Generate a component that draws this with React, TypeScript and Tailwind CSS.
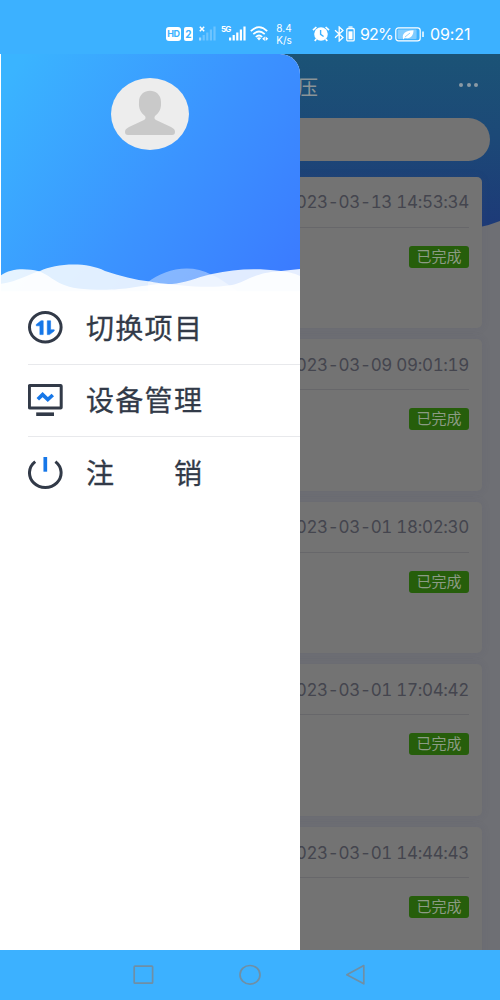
import type { ReactNode } from 'react';

const records = [
  '2023-03-13 14:53:34',
  '2023-03-09 09:01:19',
  '2023-03-01 18:02:30',
  '2023-03-01 17:04:42',
  '2023-03-01 14:44:43',
];

function Signal({ className, faded }: { className: string; faded?: boolean }) {
  return (
    <svg className={className} viewBox="0 0 17 15" fill="#fff">
      <rect x="0" y="11.5" width="2.2" height="3" />
      <rect x="3.6" y="9" width="2.2" height="5.5" opacity={faded ? 0.5 : 1} />
      <rect x="7.2" y="6.5" width="2.2" height="8" opacity={faded ? 0.5 : 1} />
      <rect x="10.8" y="3.5" width="2.2" height="11" opacity={faded ? 0.5 : 1} />
      <rect x="14.4" y="0.5" width="2.2" height="14" opacity={faded ? 0.5 : 1} />
    </svg>
  );
}

function StatusBar() {
  return (
    <header className="h-[54px] shrink-0 bg-[#3cb1ff] flex items-start pt-[23px] pl-[166px] text-white">
      <div className="mt-[4px] h-[14px] w-[15px] rounded-[3px] bg-white text-[#3cb1ff] text-[9px] leading-[14px] font-bold text-center tracking-[-0.3px]">HD</div>
      <div className="mt-[4px] ml-[3px] h-[14px] w-[9px] rounded-[2px] bg-white text-[#3cb1ff] text-[10px] leading-[14px] font-bold text-center">2</div>
      <svg className="ml-[6px] mt-[3px] w-[6px] h-[6px]" viewBox="0 0 6 6" stroke="#fff" strokeWidth="1.5">
        <path d="M.8.8l4.4 4.4M5.2.8L.8 5.2" />
      </svg>
      <Signal className="w-[17px] h-[15px] -ml-[6px] mt-[3px] opacity-50" faded />
      <span className="ml-[5px] mt-[2px] w-[9px] text-[8px] leading-[9px] font-bold tracking-[-0.8px]">5G</span>
      <Signal className="w-[17px] h-[15px] mt-[3px] -ml-px" />
      <svg className="ml-[4px] mt-[3px] w-[19px] h-[16px]" viewBox="0 0 19 16" fill="none" stroke="#fff" strokeWidth="1.7">
        <path d="M.8 5.2Q9 -2.8 17.2 5.2M3.3 8.2Q9 2.8 14.7 8.2M5.8 11Q9 8 12.2 11" />
        <path d="M6.8 12L9 14.5L11.2 12Q9 10.5 6.8 12Z" fill="#fff" stroke="none" />
        <path d="M14.8 10.5L12.2 12.8L14.8 15ZM15.6 10.5L18.3 12.8L15.6 15Z" fill="#fff" stroke="none" />
      </svg>
      <div className="ml-[5px] w-[20px] -mt-px text-center text-[10px] leading-[12px]">
        <div>8.4</div>
        <div>K/s</div>
      </div>
      <svg className="ml-[18px] mt-[3px] w-[18px] h-[16px]" viewBox="0 0 18 16">
        <circle cx="9" cy="8" r="6.8" fill="#fff" />
        <path d="M1 4.2L4.4 1M17 4.2L13.6 1M4.3 13L2.8 15M13.7 13L15.2 15" stroke="#fff" strokeWidth="1.7" />
        <path d="M8.6 4V8.4L11.6 10.5" stroke="#3cb1ff" strokeWidth="1.4" fill="none" />
      </svg>
      <svg className="ml-[4px] mt-[3px] w-[11px] h-[16px]" viewBox="0 0 11 16" fill="none" stroke="#fff" strokeWidth="1.3">
        <path d="M1 4.2L9 11.4L5.2 15V1L9 4.6L1 11.8" />
      </svg>
      <svg className="ml-px mt-[3px] w-[9px] h-[16px]" viewBox="0 0 9 16" fill="none" stroke="#fff" strokeWidth="1.3">
        <rect x="0.8" y="2.5" width="7.4" height="12.4" rx="1.2" />
        <path d="M2.5 1H6.5" />
        <rect x="2.5" y="5.3" width="4" height="8" fill="#fff" stroke="none" />
      </svg>
      <span className="ml-[5px] w-[33px] text-[16px] leading-[23px] tracking-[-0.9px] whitespace-nowrap">92%</span>
      <svg className="ml-[2px] mt-[4px] w-[30px] h-[15px]" viewBox="0 0 30 15">
        <rect x="0.8" y="0.8" width="24.4" height="13" rx="2.6" fill="none" stroke="#fff" strokeWidth="1.2" />
        <rect x="2.6" y="2.6" width="19" height="9.4" rx="1" fill="#fff" opacity=".35" />
        <path d="M8 11.5C7 7 10 3.7 18.5 3.3C18.5 8 16 12.5 9.7 10.8L8.2 12.5Z" fill="#fff" />
        <path d="M10 10L15 6" stroke="#75c8ff" strokeWidth=".8" />
        <path d="M28 4.5V10" stroke="#fff" strokeWidth="1.5" />
      </svg>
      <span className="ml-[5px] text-[16px] leading-[23px] tracking-[-0.1px]">09:21</span>
    </header>
  );
}

function RecordCard({ time }: { time: string }) {
  return (
    <article className="h-[151.6px] shrink-0 rounded-[5px] bg-[#737373] px-[13px] pt-px shadow-[0_0_8px_rgba(70,70,110,0.12)]">
      <div className="h-[50px] flex items-center justify-end border-b border-[#67676a] pt-[2px] text-[17px] tracking-[-0.32px] text-[#44454e] tabular-nums whitespace-nowrap">
        {time}
      </div>
      <div className="flex justify-end pt-[18px]">
        <span className="h-[22px] w-[60px] rounded-[3px] bg-[#265e0b] text-center text-[15px] leading-[21px] text-[#8b9b84]">已完成</span>
      </div>
    </article>
  );
}

function RecordsPage() {
  return (
    <div className="relative h-full overflow-hidden bg-[#6e6f74]">
      <svg className="absolute left-0 top-0 w-[500px] h-[180px]" viewBox="0 0 500 180">
        <defs>
          <linearGradient id="banner" x1="0" y1="0" x2="0" y2="1">
            <stop offset="0" stopColor="#1b5376" />
            <stop offset=".45" stopColor="#1c4977" />
            <stop offset="1" stopColor="#1d3978" />
          </linearGradient>
        </defs>
        <path d="M0 0H500V167Q490 171 480 173Q250 186 0 167Z" fill="url(#banner)" />
      </svg>
      <div className="relative flex h-full flex-col">
        <div className="flex h-[64px] shrink-0 items-center justify-end pr-[22px]">
          <h1 className="mr-[141px] mt-[4px] text-[20.5px] leading-[28px] text-[#8b9497]">保压</h1>
          <div className="flex gap-[3.5px] -mt-[2px]">
            <i className="size-[4px] rounded-full bg-[#8b9aa5]" />
            <i className="size-[4px] rounded-full bg-[#8b9aa5]" />
            <i className="size-[4px] rounded-full bg-[#8b9aa5]" />
          </div>
        </div>
        <div className="mx-[10px] h-[43px] shrink-0 rounded-full bg-[#737373]" />
        <div className="mt-[15.5px] flex flex-col gap-[11px] pl-[18px] pr-[18px]">
          {records.map((time) => (
            <RecordCard key={time} time={time} />
          ))}
        </div>
      </div>
    </div>
  );
}

function MenuItem({ icon, label, last }: { icon: ReactNode; label: string; last?: boolean }) {
  return (
    <li className={last ? 'ml-[28px] flex h-[72.5px] items-center' : 'ml-[28px] flex h-[72.5px] items-center border-b border-[#e8e9ec]'}>
      {icon}
      <span className="ml-[23px] pt-[2px] whitespace-pre text-[28px] leading-[40px] font-normal tracking-[1.3px] text-[#323a48] [-webkit-text-stroke:0.3px_#323a48]">{label}</span>
    </li>
  );
}

function Drawer() {
  return (
    <aside className="absolute left-0 top-0 h-full w-[300px] overflow-hidden rounded-tr-[20px] bg-white">
      <div className="relative ml-px flex h-[238px] justify-center bg-[linear-gradient(125deg,#3ab4ff_5%,#3b93ff_55%,#3b79ff_100%)] pt-[24px] pr-[2px]">
        <svg className="h-[72px] w-[78px]" viewBox="0 0 78 72">
          <ellipse cx="39" cy="36" rx="39" ry="36" fill="#ededed" />
          <path d="M28 24C28 9 50 9 50 24C50.5 31 48 35 44 38C43 40 43.5 41 45 42L60 49C63 50.5 64 52 64 54C64 56 63 57 61 57H17C15 57 14 56 14 54C14 52 15 50.5 18 49L33 42C34.5 41 35 40 34 38C30 35 27.5 31 28 24Z" fill="#c9c9c9" />
        </svg>
        <svg className="absolute -left-px top-[200px] h-[56px] w-[300px]" viewBox="0 0 300 56">
          <path d="M148 28C163 17 188 8 212 21C222 25 228 31 237 37V56H148Z" fill="#fff" opacity=".38" />
          <path d="M0 30C20 27 28 20 40 17C55 10 85 7 105 17C120 22 135 26 150 27.5C160 29.5 168 30 172 30C185 29 195 24 212 20C235 15 255 14 281 17C290 18 296 20 300 22V56H0Z" fill="#fff" opacity=".85" />
          <path d="M0 22C12 13 28 15 38 17C54 22 55 34 90 35.5C125 37 135 32 160 30C175 29 200 36 232 31C246 28 252 19 281 17L300 15V56H0Z" fill="#fff" opacity=".87" />
          <rect y="37" width="300" height="19" fill="#fff" opacity=".8" />
        </svg>
      </div>
      <ul>
        <MenuItem
          label="切换项目"
          icon={
            <svg className="h-[35px] w-[35px]" viewBox="0 0 35 35" fill="none">
              <ellipse cx="17.3" cy="17.3" rx="15.8" ry="14.7" stroke="#323a48" strokeWidth="3" />
              <g fill="#1677e8" stroke="#1677e8" strokeWidth=".6" strokeLinejoin="round">
                <path d="M15.2 10.8V24.6H11.9V15.8H8.3V14.4L13 10.8Z" />
                <path d="M19.3 10.8H22.6V19.8H26.2V21L21.5 24.6H19.3Z" />
              </g>
            </svg>
          }
        />
        <MenuItem
          label="设备管理"
          icon={
            <svg className="h-[35px] w-[35px]" viewBox="0 0 35 35" fill="none">
              <rect x="1.4" y="2.4" width="31.8" height="22.6" rx=".6" stroke="#323a48" strokeWidth="3" />
              <path d="M8.2 31.2H26" stroke="#323a48" strokeWidth="3.6" />
              <path d="M9.8 16.2L14.6 11.6L19.8 16.6L24.8 12" stroke="#1677e8" strokeWidth="3.6" />
            </svg>
          }
        />
        <MenuItem
          last
          label="注　　销"
          icon={
            <svg className="h-[35px] w-[35px]" viewBox="0 0 35 35" fill="none">
              <path d="M7.2 5.6A15.8 14.6 0 1 0 27.4 5.6" stroke="#323a48" strokeWidth="3" />
              <path d="M17.3 1V15.7" stroke="#1677e8" strokeWidth="3.7" />
            </svg>
          }
        />
      </ul>
    </aside>
  );
}

function NavigationBar() {
  return (
    <nav className="flex h-[50px] shrink-0 items-center justify-center gap-[84px] bg-[#3cb1ff]">
      <svg className="h-[22px] w-[22px]" viewBox="0 0 22 22" fill="none" stroke="#6f8fa5" strokeWidth="1.7">
        <rect x="1.2" y="2.2" width="18.4" height="17" rx=".8" />
      </svg>
      <svg className="h-[22px] w-[22px]" viewBox="0 0 22 22" fill="none" stroke="#6f8fa5" strokeWidth="1.7">
        <ellipse cx="11" cy="10.8" rx="10" ry="9.3" />
      </svg>
      <svg className="h-[22px] w-[22px]" viewBox="0 0 22 22" fill="none" stroke="#6f8fa5" strokeWidth="1.7" strokeLinejoin="round">
        <path d="M1.8 10.8L18.8 1.6V19.8Z" />
      </svg>
    </nav>
  );
}

export default function App() {
  return (
    <div className="flex h-[1000px] w-[500px] flex-col overflow-hidden font-['Inter','Noto_Sans_CJK_SC',sans-serif]">
      <StatusBar />
      <main className="relative min-h-0 flex-1">
        <RecordsPage />
        <Drawer />
      </main>
      <NavigationBar />
    </div>
  );
}
